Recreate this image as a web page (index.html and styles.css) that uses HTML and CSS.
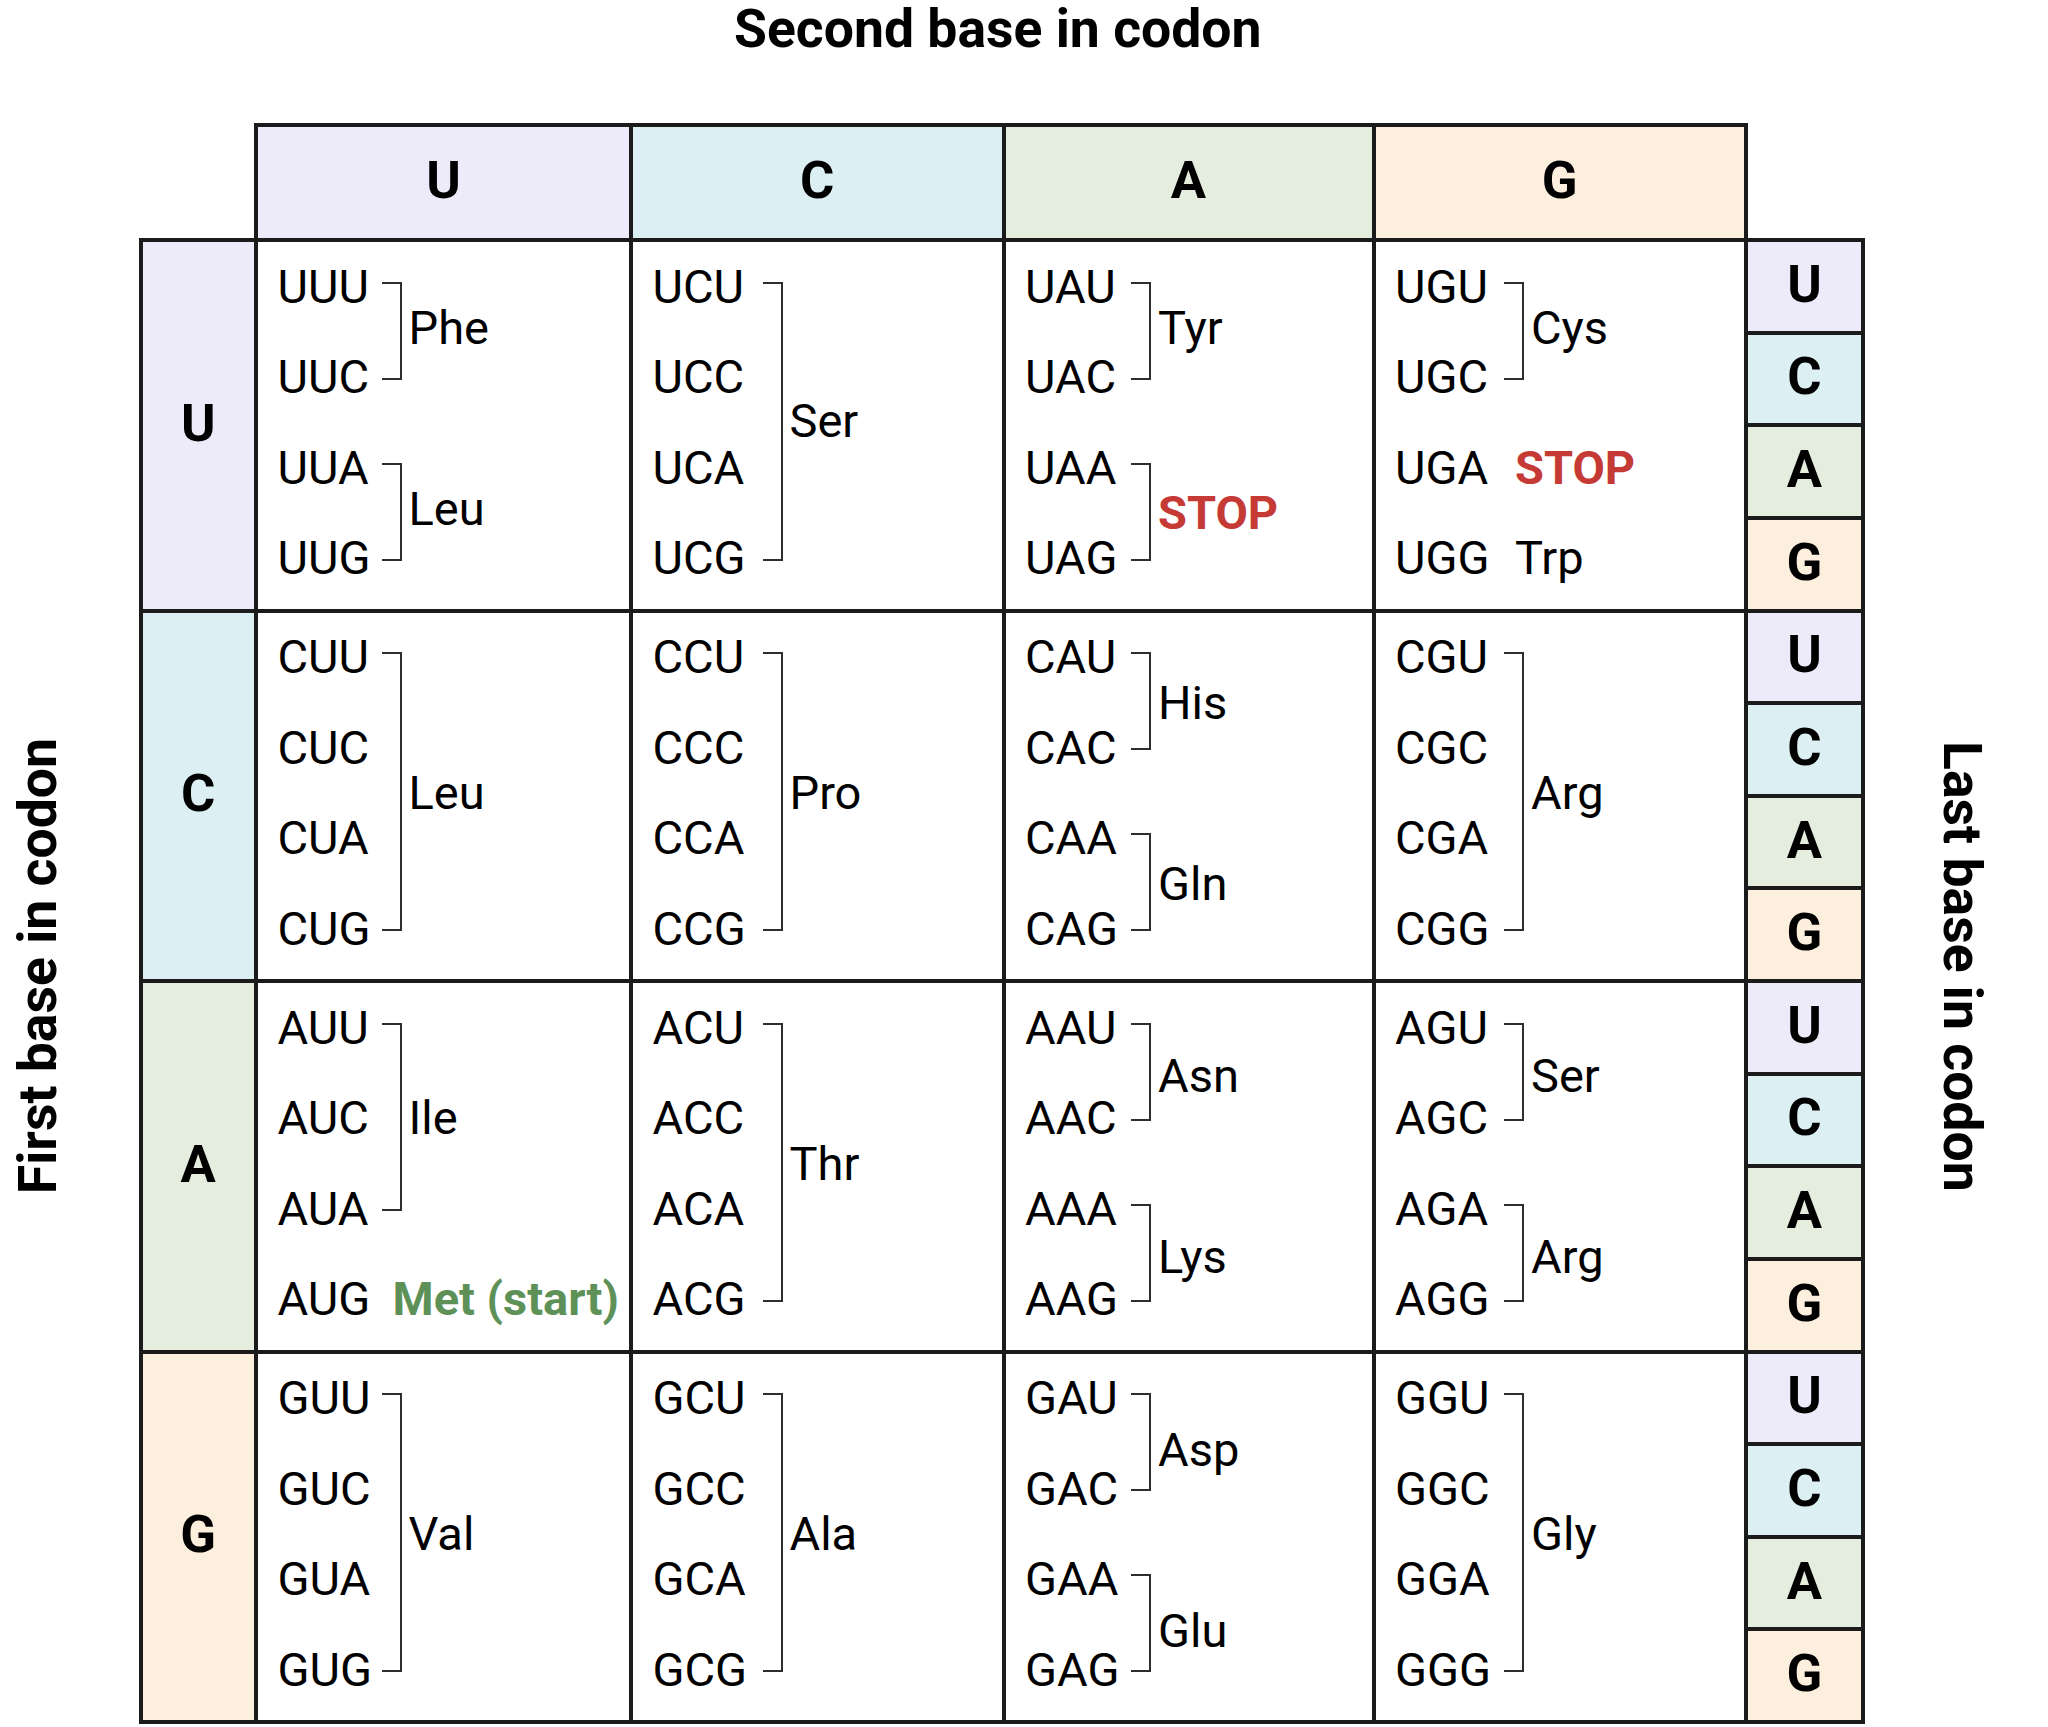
FILE: index.html
```html
<!DOCTYPE html>
<html lang="en">
<head>
<meta charset="utf-8">
<title>Genetic code table</title>
<link rel="stylesheet" href="styles.css">
</head>
<body>
<div class="page">
  <div class="side side-left"><div class="axis axis-first">First base in codon</div></div>
  <div class="main">
    <div class="title">Second base in codon</div>
    <div class="board">
      <div class="corner"></div>
      <div class="head u">U</div>
      <div class="head c">C</div>
      <div class="head a">A</div>
      <div class="head g">G</div>
      <div class="corner"></div>

      <!-- Row U -->
      <div class="first u">U</div>
      <div class="cell c1 row-u"><div class="codons">
        <span class="cod">UUU</span><span class="cod">UUC</span><span class="cod">UUA</span><span class="cod">UUG</span>
        <span class="br r1"></span><span class="aa r1">Phe</span>
        <span class="br r3"></span><span class="aa r3">Leu</span>
      </div></div>
      <div class="cell c2 row-u"><div class="codons">
        <span class="cod">UCU</span><span class="cod">UCC</span><span class="cod">UCA</span><span class="cod">UCG</span>
        <span class="br all"></span><span class="aa all">Ser</span>
      </div></div>
      <div class="cell c3 row-u"><div class="codons">
        <span class="cod">UAU</span><span class="cod">UAC</span><span class="cod">UAA</span><span class="cod">UAG</span>
        <span class="br r1"></span><span class="aa r1">Tyr</span>
        <span class="br r3"></span><span class="aa r3 stop">STOP</span>
      </div></div>
      <div class="cell c4 row-u"><div class="codons">
        <span class="cod">UGU</span><span class="cod">UGC</span><span class="cod">UGA</span><span class="cod">UGG</span>
        <span class="br r1"></span><span class="aa r1">Cys</span>
        <span class="one s3 stop">STOP</span>
        <span class="one s4">Trp</span>
      </div></div>
      <div class="last">
        <div class="sub u">U</div><div class="sub c">C</div><div class="sub a">A</div><div class="sub g">G</div>
      </div>

      <!-- Row C -->
      <div class="first c">C</div>
      <div class="cell c1"><div class="codons">
        <span class="cod">CUU</span><span class="cod">CUC</span><span class="cod">CUA</span><span class="cod">CUG</span>
        <span class="br all"></span><span class="aa all">Leu</span>
      </div></div>
      <div class="cell c2"><div class="codons">
        <span class="cod">CCU</span><span class="cod">CCC</span><span class="cod">CCA</span><span class="cod">CCG</span>
        <span class="br all"></span><span class="aa all">Pro</span>
      </div></div>
      <div class="cell c3"><div class="codons">
        <span class="cod">CAU</span><span class="cod">CAC</span><span class="cod">CAA</span><span class="cod">CAG</span>
        <span class="br r1"></span><span class="aa r1">His</span>
        <span class="br r3"></span><span class="aa r3">Gln</span>
      </div></div>
      <div class="cell c4"><div class="codons">
        <span class="cod">CGU</span><span class="cod">CGC</span><span class="cod">CGA</span><span class="cod">CGG</span>
        <span class="br all"></span><span class="aa all">Arg</span>
      </div></div>
      <div class="last">
        <div class="sub u">U</div><div class="sub c">C</div><div class="sub a">A</div><div class="sub g">G</div>
      </div>

      <!-- Row A -->
      <div class="first a">A</div>
      <div class="cell c1"><div class="codons">
        <span class="cod">AUU</span><span class="cod">AUC</span><span class="cod">AUA</span><span class="cod">AUG</span>
        <span class="br r13"></span><span class="aa r13">Ile</span>
        <span class="one s4 start">Met (start)</span>
      </div></div>
      <div class="cell c2"><div class="codons">
        <span class="cod">ACU</span><span class="cod">ACC</span><span class="cod">ACA</span><span class="cod">ACG</span>
        <span class="br all"></span><span class="aa all">Thr</span>
      </div></div>
      <div class="cell c3 row-a"><div class="codons">
        <span class="cod">AAU</span><span class="cod">AAC</span><span class="cod">AAA</span><span class="cod">AAG</span>
        <span class="br r1"></span><span class="aa r1">Asn</span>
        <span class="br r3"></span><span class="aa r3">Lys</span>
      </div></div>
      <div class="cell c4 row-a"><div class="codons">
        <span class="cod">AGU</span><span class="cod">AGC</span><span class="cod">AGA</span><span class="cod">AGG</span>
        <span class="br r1"></span><span class="aa r1">Ser</span>
        <span class="br r3"></span><span class="aa r3">Arg</span>
      </div></div>
      <div class="last">
        <div class="sub u">U</div><div class="sub c">C</div><div class="sub a">A</div><div class="sub g">G</div>
      </div>

      <!-- Row G -->
      <div class="first g">G</div>
      <div class="cell c1"><div class="codons">
        <span class="cod">GUU</span><span class="cod">GUC</span><span class="cod">GUA</span><span class="cod">GUG</span>
        <span class="br all"></span><span class="aa all">Val</span>
      </div></div>
      <div class="cell c2"><div class="codons">
        <span class="cod">GCU</span><span class="cod">GCC</span><span class="cod">GCA</span><span class="cod">GCG</span>
        <span class="br all"></span><span class="aa all">Ala</span>
      </div></div>
      <div class="cell c3 row-g"><div class="codons">
        <span class="cod">GAU</span><span class="cod">GAC</span><span class="cod">GAA</span><span class="cod">GAG</span>
        <span class="br r1"></span><span class="aa r1">Asp</span>
        <span class="br r3"></span><span class="aa r3">Glu</span>
      </div></div>
      <div class="cell c4"><div class="codons">
        <span class="cod">GGU</span><span class="cod">GGC</span><span class="cod">GGA</span><span class="cod">GGG</span>
        <span class="br all"></span><span class="aa all">Gly</span>
      </div></div>
      <div class="last">
        <div class="sub u">U</div><div class="sub c">C</div><div class="sub a">A</div><div class="sub g">G</div>
      </div>
    </div>
  </div>
  <div class="side side-right"><div class="axis axis-last">Last base in codon</div></div>
</div>
</body>
</html>
```

FILE: styles.css
```css
* {
  box-sizing: border-box;
}

html,
body {
  margin: 0;
  background: #ffffff;
}

body {
  font-family: Roboto, "Liberation Sans", sans-serif;
  color: #000000;
}

.page {
  display: flex;
  width: 2048px;
  height: 1727px;
}

/* Axis labels at the sides */
.side {
  height: 1722px;
  padding-top: 240px;
  padding-bottom: 30px;
  display: flex;
  align-items: center;
}

.side-left {
  width: 140.5px;
  flex: none;
}

.side-right {
  flex: 1;
  padding-left: 72px;
}

.axis {
  writing-mode: vertical-rl;
  font-weight: 700;
  font-size: 53.5px;
  line-height: 54px;
  white-space: nowrap;
}

.axis-first {
  transform: rotate(180deg);
  margin-left: 10.5px;
}

/* Centre column: title + board */
.main {
  width: 1722.5px;
  flex: none;
  display: flex;
  flex-direction: column;
}

.title {
  height: 125px;
  padding-top: 2px;
  padding-right: 8px;
  text-align: center;
  font-weight: 700;
  font-size: 53.5px;
  line-height: 53px;
}

.board {
  display: grid;
  grid-template-columns: 115.5px 375px 372.5px 370px 372.5px 117px;
  grid-template-rows: 115px repeat(4, 370.5px);
}

.head,
.first,
.cell,
.sub {
  outline: 4px solid #1b1b1b;
  outline-offset: -2px;
}

.head,
.first,
.sub {
  display: flex;
  align-items: center;
  justify-content: center;
  padding-bottom: 5px;
  font-weight: 700;
  font-size: 52.5px;
}

.u { background: #edebf9; }
.c { background: #dcf0f3; }
.a { background: #e4edde; }
.g { background: #fcefde; }

.last {
  display: grid;
  grid-template-rows: repeat(4, 1fr);
}

/* Codon cells */
.cell {
  padding-left: 21.5px;
}

.codons {
  display: grid;
  grid-template-columns: 110px 20px auto;
  grid-template-rows: repeat(4, 90.5px);
  margin-top: 1px;
  font-size: 47px;
  white-space: nowrap;
}

.c1 .codons { grid-template-columns: 104px 20px auto; }
.c2 .codons { grid-template-columns: 110px 20px auto; }
.c3 .codons { grid-template-columns: 106px 20px auto; }
.c4 .codons { grid-template-columns: 109px 20px auto; }

.cod {
  grid-column: 1;
  align-self: center;
}

.br {
  grid-column: 2;
  border: 2px solid #2e2e2e;
  border-left: 0;
  margin: 40.7px 0 42.2px;
}

.aa {
  grid-column: 3;
  align-self: center;
  margin-left: 7px;
}

.one {
  grid-column: 2 / 4;
  align-self: center;
  margin-left: 11px;
}

.r1 { grid-row: 1 / span 2; }
.r3 { grid-row: 3 / span 2; }
.r13 { grid-row: 1 / span 3; }
.all { grid-row: 1 / span 4; }
.s3 { grid-row: 3; }
.s4 { grid-row: 4; }

/* Label placement tweaks per row, as in the original artwork */
.row-u .aa { margin-bottom: 8px; }
.row-u .aa.all { margin-bottom: 4px; }
.row-u .aa.stop { margin-bottom: 0; }
.row-a .aa { margin-top: 5px; }
.row-g .aa { margin-top: 13px; }

.stop {
  color: #c53a35;
  font-weight: 700;
}

.start {
  color: #5e9158;
  font-weight: 700;
}
```
